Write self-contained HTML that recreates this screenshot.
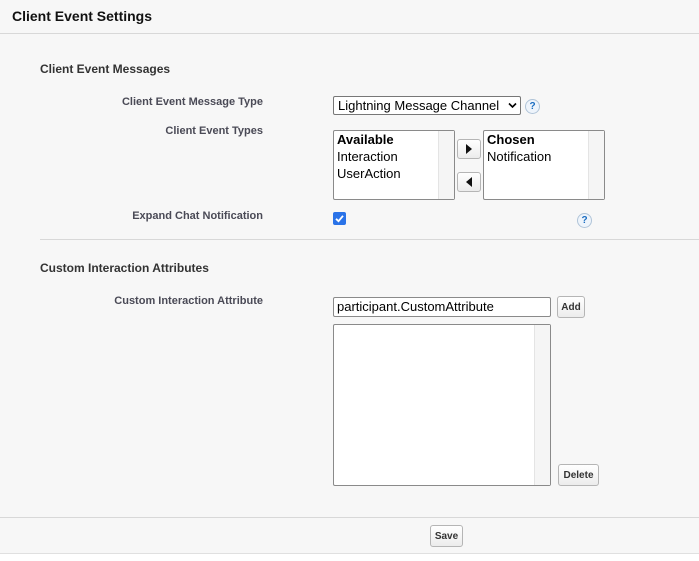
<!DOCTYPE html><html><head><style>
body{margin:0;width:699px;height:561px;background:#fff;font-family:"Liberation Sans",Arial,sans-serif;position:relative;overflow:hidden}
.a{position:absolute}
.bg{left:0;top:0;width:699px;height:553px;background:#f7f7f7;border-bottom:1px solid #e0e0e0}
.lbl{right:436px;font-size:11px;font-weight:bold;color:#4a4a56;text-align:right;white-space:nowrap}
.h{font-weight:bold;color:#333;font-size:12px}
.box{background:#fff;border:1px solid #8a8a8a;border-radius:2px;box-sizing:border-box}
.sb{position:absolute;right:0;top:0;bottom:0;width:15px;background:#f5f5f5;border-left:1px solid #e4e4e4}
.btn{box-sizing:border-box;border:1px solid #b5b5b5;border-radius:3px;background:linear-gradient(#fff,#ececec);font-size:10px;font-weight:bold;color:#333;text-align:center}
.q{width:15px;height:15px;border-radius:50%;border:1px solid #b0c4d8;background:#eef4fb;color:#1b6dc1;font-size:10px;font-weight:bold;text-align:center;line-height:14px;box-sizing:border-box}
.t{font-size:13px;color:#000;line-height:17px}
</style></head><body>
<div class="a bg"></div>
<div class="a" style="left:12px;top:8px;font-size:14px;font-weight:bold;color:#111">Client Event Settings</div>
<div class="a" style="left:0;top:33px;width:699px;height:1px;background:#d8d8d8"></div>
<div class="a h" style="left:40px;top:62px">Client Event Messages</div>
<div class="a lbl" style="top:96px">Client Event Message Type</div>
<div class="a lbl" style="top:125px">Client Event Types</div>
<div class="a lbl" style="top:210px">Expand Chat Notification</div>
<div class="a box" style="left:333px;top:96px;width:188px;height:19px;font-size:13px;padding:1px 0 0 4px;color:#000;border-color:#777">Lightning Message Channel<svg style="position:absolute;right:3px;top:5px" width="9" height="7"><path d="M1 1.5L4.5 5L8 1.5" stroke="#000" stroke-width="1.6" fill="none"/></svg></div>
<div class="a q" style="left:525px;top:99px">?</div>
<div class="a box t" style="left:333px;top:130px;width:122px;height:70px;padding:0 3px"><b>Available</b><br>Interaction<br>UserAction<div class="sb"></div></div>
<div class="a btn" style="left:457px;top:139px;width:24px;height:20px"><svg width="8" height="10" style="margin-top:4px"><path d="M1 0L7 5L1 10Z" fill="#111"/></svg></div>
<div class="a btn" style="left:457px;top:172px;width:24px;height:20px"><svg width="8" height="10" style="margin-top:4px"><path d="M7 0L1 5L7 10Z" fill="#111"/></svg></div>
<div class="a box t" style="left:483px;top:130px;width:122px;height:70px;padding:0 3px"><b>Chosen</b><br>Notification<div class="sb"></div></div>
<div class="a" style="left:333px;top:212px;width:13px;height:13px;border-radius:2px;background:#2a73e8"><svg width="13" height="13"><path d="M3 6.8L5.5 9.2L10 3.8" stroke="#fff" stroke-width="1.8" fill="none"/></svg></div>
<div class="a q" style="left:577px;top:213px">?</div>
<div class="a" style="left:40px;top:239px;width:659px;height:1px;background:#d8d8d8"></div>
<div class="a h" style="left:40px;top:261px">Custom Interaction Attributes</div>
<div class="a lbl" style="top:295px">Custom Interaction Attribute</div>
<div class="a box" style="left:333px;top:297px;width:218px;height:20px;font-size:13px;padding:1px 0 0 3px;color:#000">participant.CustomAttribute</div>
<div class="a btn" style="left:557px;top:296px;width:28px;height:22px;line-height:21px">Add</div>
<div class="a box" style="left:333px;top:324px;width:218px;height:162px"><div class="sb"></div></div>
<div class="a btn" style="left:558px;top:464px;width:41px;height:22px;line-height:21px">Delete</div>
<div class="a" style="left:0;top:517px;width:699px;height:1px;background:#d8d8d8"></div>
<div class="a btn" style="left:430px;top:525px;width:33px;height:22px;line-height:21px">Save</div>
</body></html>
